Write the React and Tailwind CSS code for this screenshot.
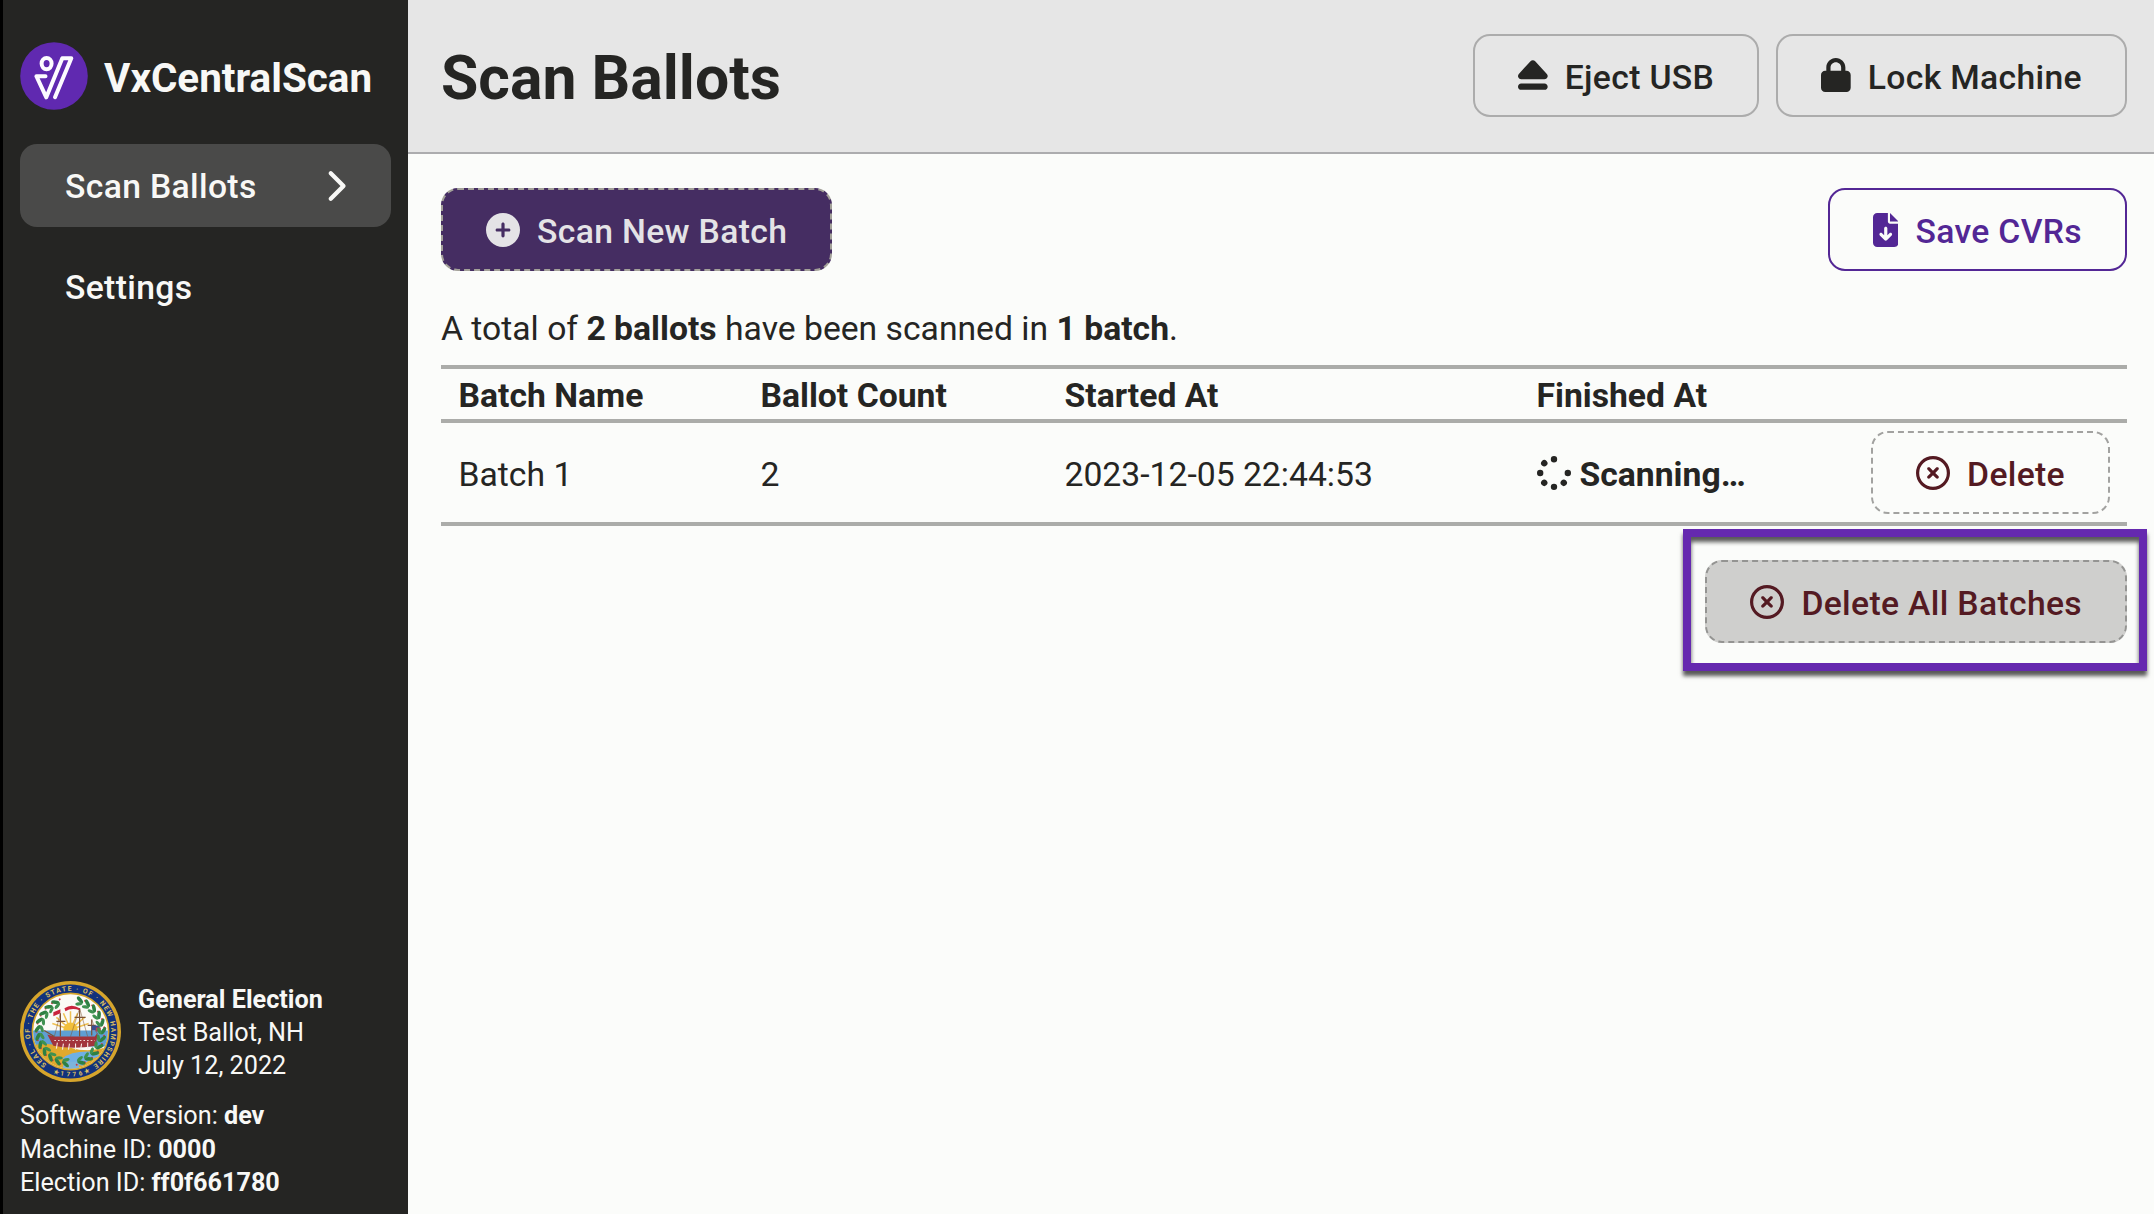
import {
  FaCirclePlus,
  FaEject,
  FaLock,
  FaFileArrowDown,
  FaRegCircleXmark,
  FaChevronRight,
  FaSpinner,
} from "react-icons/fa6";

function Logo() {
  return (
    <svg viewBox="0 0 68 68" className="size-[68px] shrink-0">
      <circle cx="34" cy="34" r="33.8" fill="#6029b0" />
      <g fill="none" stroke="#fdfbff" strokeWidth="4" strokeLinecap="round" strokeLinejoin="round">
        <ellipse cx="26.6" cy="21.6" rx="5" ry="5.6" />
        <path d="M25.5 34.2H16.4L26.3 55.3L42.3 16.2H51.3L35 55.2" />
      </g>
    </svg>
  );
}

const LEAVES = Array.from({ length: 22 }, (_, i) => (i < 11 ? 22 + i * 14.4 : 194 + (i - 11) * 14.4));

function Seal() {
  return (
    <svg viewBox="0 0 100 100" className="size-[101px] shrink-0">
      <defs>
        <path id="ring" d="M50 90.2 A40.2 40.2 0 1 1 50.1 90.2" />
        <path id="ringLow" d="M18.4 81.4 A44.6 44.6 0 0 0 81.6 81.4" />
        <clipPath id="disc">
          <circle cx="50" cy="50" r="37" />
        </clipPath>
      </defs>
      <circle cx="50" cy="50" r="50" fill="#d6a52c" />
      <circle cx="50" cy="50" r="46.5" fill="#12327c" />
      <circle cx="50" cy="50" r="38.6" fill="#d6a52c" />
      <circle cx="50" cy="50" r="37" fill="#fbfaf6" />
      <g clipPath="url(#disc)">
        <g stroke="#efc052" strokeWidth="1.5">
          <path d="M50 48V30M50 48L43 32M50 48L57 32M50 48L36 36M50 48L64 36M50 48L32 42M50 48L68 42" />
        </g>
        <circle cx="50" cy="48" r="7" fill="#f2bf3c" />
        <rect x="10" y="49" width="80" height="16" fill="#5e9fd4" />
        <path d="M10 64Q30 60 50 66T90 64V90H10Z" fill="#e0a92e" />
        <path d="M42 77Q50 69 72 70L80 74Q66 78 62 84Q50 82 42 77Z" fill="#6fb0e6" />
        <path d="M44 80H57L60 90H41Z" fill="#7db4dc" />
        <path d="M27 53L34 55H74L77 51L75 64Q52 68 33 64Z" fill="#a2343c" />
        <path d="M34 59H74" stroke="#f0dcd6" strokeWidth="1" strokeDasharray="1.6 2" />
        <path d="M37 61L36 67M43 62L42 68M49 62L48 68M55 62L55 68M61 62L60 68M67 61L67 67" stroke="#f4e8e4" strokeWidth="1.1" />
        <g stroke="#7d5233" strokeWidth="1.2" fill="none">
          <path d="M40 55V32M59 55V27M71 54V38M36 40H45M54 36H65M67 44H75M24 49L34 55" />
          <path d="M40 32L34 55M59 27L50 55M59 27L67 55M71 38L76 52" strokeWidth=".5" />
        </g>
        <path d="M33 31L40 28V32L33 35ZM44 27Q51 22 59 27V29Q51 26 45 30Z" fill="#c9253d" />
        <path d="M71 44H79V49H71Z" fill="#394f93" />
        <path d="M75 46H80V50H75Z" fill="#b8414f" />
      </g>
      {LEAVES.map((a) => (
        <g key={a} transform={`rotate(${a} 50 50)`}>
          <ellipse cx="47" cy="17.5" rx="4.2" ry="1.8" fill="#2f8043" transform="rotate(28 47 17.5)" />
          <ellipse cx="47.5" cy="21.6" rx="3.6" ry="1.6" fill="#3f9150" transform="rotate(-28 47.5 21.6)" />
          <circle cx="52" cy="16.5" r="1" fill="#c43a48" />
        </g>
      ))}
      <text className="font-[Roboto] font-bold" fontSize="6.8" fill="#dfc063">
        <textPath href="#ring" startOffset="25" textLength="203">
          SEAL · OF · THE · STATE · OF · NEW HAMPSHIRE
        </textPath>
      </text>
      <text className="font-[Roboto] font-bold" fontSize="6.2" fill="#dfc063">
        <textPath href="#ringLow" startOffset="17" textLength="38">
          ★1776★
        </textPath>
      </text>
    </svg>
  );
}

function Button({ icon: Icon, iconWidth = "w-[34px]", children, className }) {
  return (
    <button
      className={`flex h-[83px] items-center gap-[17px] rounded-[17px] border-2 px-[43px] text-[33.7px] font-medium tracking-[0.01em] ${className}`}
    >
      <Icon className={`h-[34px] shrink-0 ${iconWidth}`} />
      <span className="pt-[5px] leading-none whitespace-nowrap">{children}</span>
    </button>
  );
}

function Sidebar() {
  return (
    <aside className="flex w-[408px] shrink-0 flex-col border-l-[3px] border-black bg-[#252523] px-[17px] text-[#f8f8f6]">
      <div className="mt-[42px] flex items-center gap-[16px]">
        <Logo />
        <span className="pt-[6px] text-[40.4px] leading-none font-bold">VxCentralScan</span>
      </div>
      <nav className="mt-[34px] flex flex-col gap-[18px] text-[33.7px] leading-none font-medium tracking-[0.01em]">
        <a className="flex h-[83px] items-center justify-between rounded-[17px] bg-[#4a4a49] pr-[39px] pl-[45px]">
          <span className="pt-[3px]">Scan Ballots</span>
          <FaChevronRight className="size-[34px]" />
        </a>
        <a className="flex h-[83px] items-center pl-[45px]">
          <span className="pt-[3px]">Settings</span>
        </a>
      </nav>
      <div className="mt-auto flex items-center gap-[17px] text-[25.2px] leading-[32.7px]">
        <Seal />
        <div className="pt-[3px]">
          <div className="font-bold">General Election</div>
          <div>Test Ballot, NH</div>
          <div>July 12, 2022</div>
        </div>
      </div>
      <div className="mt-[17px] mb-[15px] text-[25.2px] leading-[33.2px]">
        <div>Software Version: <b>dev</b></div>
        <div>Machine ID: <b>0000</b></div>
        <div>Election ID: <b>ff0f661780</b></div>
      </div>
    </aside>
  );
}

const COLUMNS = ["Batch Name", "Ballot Count", "Started At", "Finished At"];

export default function App() {
  return (
    <div className="flex h-[1214px] w-[2154px] overflow-hidden bg-[#fbfcfa] font-[Roboto,sans-serif] text-[#252523]">
      <Sidebar />
      <main className="flex min-w-0 flex-1 flex-col">
        <header className="flex h-[154px] shrink-0 items-center gap-[17px] border-b-2 border-[#acacae] bg-[#e6e6e6] pr-[27px] pb-[2px] pl-[33px]">
          <h1 className="mr-auto pt-[8px] text-[60.7px] leading-none font-bold">Scan Ballots</h1>
          <Button icon={FaEject} iconWidth="w-[29.7px]" className="border-[#acacac]">Eject USB</Button>
          <Button icon={FaLock} iconWidth="w-[29.7px]" className="border-[#acacac]">Lock Machine</Button>
        </header>
        <section className="flex flex-col pt-[34px] pr-[27px] pl-[33px]">
          <div className="flex justify-between">
            <Button icon={FaCirclePlus} className="border-dashed border-[#a3a199] bg-[#452d62] text-[#e4e3e6]">
              Scan New Batch
            </Button>
            <Button icon={FaFileArrowDown} iconWidth="w-[25.5px]" className="border-[#532795] text-[#532795]">
              Save CVRs
            </Button>
          </div>
          <p className="mt-[38px] text-[33.7px] leading-[40px]">
            A total of <b>2 ballots</b> have been scanned in <b>1 batch</b>.
          </p>
          <table className="mt-[16px] w-full table-fixed border-collapse text-left text-[33.7px]">
            <colgroup>
              <col className="w-[302px]" />
              <col className="w-[304px]" />
              <col className="w-[472px]" />
              <col className="w-[334px]" />
              <col />
            </colgroup>
            <thead>
              <tr className="h-[54px] border-y-4 border-[#abaca9]">
                {COLUMNS.map((h) => (
                  <th key={h} className="pt-[4px] pl-[17.5px] leading-none font-bold">{h}</th>
                ))}
                <th />
              </tr>
            </thead>
            <tbody>
              <tr className="h-[103px] border-b-4 border-[#abaca9]">
                <td className="pt-[5px] pl-[17.5px]">Batch 1</td>
                <td className="pt-[5px] pl-[17.5px]">2</td>
                <td className="pt-[5px] pl-[17.5px]">2023-12-05 22:44:53</td>
                <td className="pt-[2px] pl-[17.5px]">
                  <span className="flex items-center gap-[9px] font-bold">
                    <FaSpinner className="size-[34px]" />
                    <span className="pt-[3px]">Scanning…</span>
                  </span>
                </td>
                <td className="pr-[17px]">
                  <div className="flex justify-end">
                    <Button icon={FaRegCircleXmark} className="border-dashed border-[#a2a2a0] text-[#541a22]">Delete</Button>
                  </div>
                </td>
              </tr>
            </tbody>
          </table>
          <div className="relative mt-[34px] self-end">
            <Button icon={FaRegCircleXmark} className="border-dashed border-[#949492] bg-[#cfcfcd] text-[#541a22]">
              Delete All Batches
            </Button>
            <div className="pointer-events-none absolute -top-[31px] -right-[20px] -bottom-[28px] -left-[22px] border-8 border-[#6529af] shadow-[0_5px_4px_rgba(0,0,0,.65),inset_0_5px_4px_rgba(0,0,0,.65)]" />
          </div>
        </section>
      </main>
    </div>
  );
}
